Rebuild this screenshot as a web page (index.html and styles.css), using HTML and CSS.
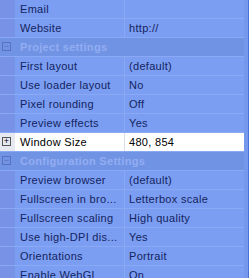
FILE: index.html
```html
<!DOCTYPE html>
<html>
<head>
    <title>Properties</title>
    <link rel="stylesheet" href="styles.css">
</head>
<body>
    <div class="props">
        <div class="row"><div class="gutter"></div><div class="name">Email</div><div class="value"></div></div>
        <div class="row"><div class="gutter"></div><div class="name">Website</div><div class="value">http://</div></div>
        <div class="row category"><div class="gutter"><span class="toggle">&minus;</span></div><div class="title">Project settings</div></div>
        <div class="row"><div class="gutter"></div><div class="name">First layout</div><div class="value">(default)</div></div>
        <div class="row"><div class="gutter"></div><div class="name">Use loader layout</div><div class="value">No</div></div>
        <div class="row"><div class="gutter"></div><div class="name">Pixel rounding</div><div class="value">Off</div></div>
        <div class="row"><div class="gutter"></div><div class="name">Preview effects</div><div class="value">Yes</div></div>
        <div class="row selected"><div class="gutter"><span class="toggle">+</span></div><div class="name">Window Size</div><div class="value">480, 854</div></div>
        <div class="row category"><div class="gutter"><span class="toggle">&minus;</span></div><div class="title">Configuration Settings</div></div>
        <div class="row"><div class="gutter"></div><div class="name">Preview browser</div><div class="value">(default)</div></div>
        <div class="row"><div class="gutter"></div><div class="name">Fullscreen in bro...</div><div class="value">Letterbox scale</div></div>
        <div class="row"><div class="gutter"></div><div class="name">Fullscreen scaling</div><div class="value">High quality</div></div>
        <div class="row"><div class="gutter"></div><div class="name">Use high-DPI dis...</div><div class="value">Yes</div></div>
        <div class="row"><div class="gutter"></div><div class="name">Orientations</div><div class="value">Portrait</div></div>
        <div class="row"><div class="gutter"></div><div class="name">Enable WebGL</div><div class="value">On</div></div>
    </div>
</body>
</html>
```

FILE: styles.css
```css
body {
    margin: 0;
    width: 249px;
    height: 278px;
    overflow: hidden;
    background-color: #7b9ef2;
    font-family: "Liberation Sans", Arial, sans-serif;
    font-size: 11px;
    letter-spacing: 0.3px;
}

.props {
    border-right: 1px solid #4a72d8;
    height: 278px;
    background-color: #7598ec;
}

.row {
    display: flex;
    height: 18px;
    margin-right: 4px;
    border-bottom: 1px solid #8aa9f5;
    line-height: 18px;
    color: #14245e;
}

.gutter {
    width: 15px;
    flex: none;
    background-color: #7893e6;
    position: relative;
}

.name {
    width: 104px;
    padding-left: 5px;
    flex: none;
    white-space: nowrap;
    overflow: hidden;
    background-color: #7b9ef2;
    border-right: 1px solid #8aa9f5;
}

.value {
    flex: 1;
    padding-left: 4px;
    white-space: nowrap;
    overflow: hidden;
    background-color: #7b9ef2;
}

.category {
    background-color: #7093e4;
}

.category .gutter {
    background-color: #7093e4;
}

.category .title {
    flex: 1;
    padding-left: 5px;
    font-weight: bold;
    color: #93adf2;
    white-space: nowrap;
}

.toggle {
    position: absolute;
    left: 2px;
    top: 4px;
    width: 7px;
    height: 7px;
    border: 1px solid #5a6fae;
    line-height: 7px;
    font-size: 9px;
    letter-spacing: 0;
    text-align: center;
    color: #3d4f8c;
}

.category .toggle {
    border-color: #5a72bd;
    color: #5a72bd;
}

.selected .gutter {
    background-color: #e6e9f0;
}

.selected .name,
.selected .value {
    background-color: #fff;
    color: #000;
    border-right-color: #d8dde8;
}

.selected .toggle {
    border-color: #555;
    color: #000;
}
```
